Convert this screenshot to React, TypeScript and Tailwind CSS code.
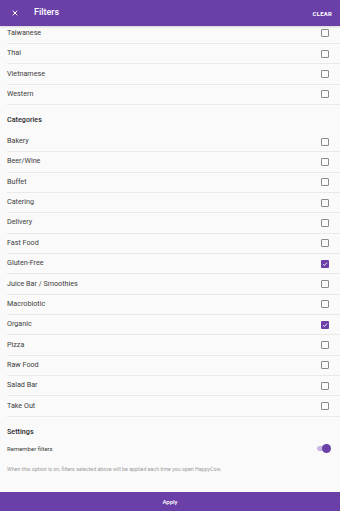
import { ReactNode } from "react"

const cuisines = ["Taiwanese", "Thai", "Vietnamese", "Western"]

const categories: { name: string; checked?: boolean }[] = [
  { name: "Bakery" },
  { name: "Beer/Wine" },
  { name: "Buffet" },
  { name: "Catering" },
  { name: "Delivery" },
  { name: "Fast Food" },
  { name: "Gluten-Free", checked: true },
  { name: "Juice Bar / Smoothies" },
  { name: "Macrobiotic" },
  { name: "Organic", checked: true },
  { name: "Pizza" },
  { name: "Raw Food" },
  { name: "Salad Bar" },
  { name: "Take Out" },
]

function Checkbox({ checked }: { checked?: boolean }) {
  if (checked) {
    return (
      <div className="w-[8px] h-[8px] rounded-[1px] bg-[#6b3fa8] flex items-center justify-center">
        <svg width="6" height="6" viewBox="0 0 12 12">
          <path d="M2 6.2 L4.8 9 L10 3.2" fill="none" stroke="white" strokeWidth="1.8" />
        </svg>
      </div>
    )
  }
  return <div className="w-[8px] h-[8px] rounded-[1px] border-[1.5px] border-[#8a8a8a]" />
}

function Row({ label, checked }: { label: string; checked?: boolean }) {
  return (
    <div className="ml-[7px] h-[20.35px] border-b border-[#e9e9e9] pr-[11px] flex items-center justify-between">
      <span className="text-[7.2px] text-[#3d3d3d]">{label}</span>
      <Checkbox checked={checked} />
    </div>
  )
}

function SectionTitle({ children }: { children: ReactNode }) {
  return (
    <div className="h-[26.8px] pl-[7px] pt-[11px] text-[7.2px] font-medium text-[#2b2b2b] leading-[7px]">
      {children}
    </div>
  )
}

export default function App() {
  return (
    <div
      className="w-full h-[511px] bg-[#fafafa] flex flex-col overflow-hidden"
      style={{ fontFamily: "Roboto, 'Liberation Sans', sans-serif" }}
    >
      <header className="relative z-10 h-[26px] shrink-0 bg-[#6b3fa8] flex items-center pl-[12px] pr-[8px] shadow-[0_1px_2px_rgba(0,0,0,0.15)]">
        <svg width="6" height="6" viewBox="0 0 12 12" className="shrink-0">
          <path d="M1.5 1.5 L10.5 10.5 M10.5 1.5 L1.5 10.5" stroke="white" strokeWidth="2" />
        </svg>
        <span className="ml-[16px] text-[9px] font-medium text-white">Filters</span>
        <span className="ml-auto text-[6px] font-bold text-white tracking-[0.2px]">CLEAR</span>
      </header>

      <main className="flex-1 overflow-hidden">
        <div className="-mt-[2.35px]">
          {cuisines.map((c) => (
            <Row key={c} label={c} />
          ))}
          <SectionTitle>Categories</SectionTitle>
          {categories.map((c) => (
            <Row key={c.name} label={c.name} checked={c.checked} />
          ))}
          <SectionTitle>Settings</SectionTitle>
          <div className="h-[11px] pl-[7px] pr-[9px] flex items-center justify-between">
            <span className="text-[6px] text-[#3d3d3d]">Remember filters</span>
            <div className="relative w-[14px] h-[9px] flex items-center">
              <div className="w-[12px] h-[5px] rounded-full bg-[#c8b5e0]" />
              <div className="absolute right-0 w-[9px] h-[9px] rounded-full bg-[#6b3fa8]" />
            </div>
          </div>
          <div className="h-[31px] pl-[7px] flex items-center text-[5.3px] text-[#9a9a9a]">
            When this option is on, filters selected above will be applied each time you open HappyCow.
          </div>
        </div>
      </main>

      <footer className="h-[19px] shrink-0 bg-[#6b3fa8] flex items-center justify-center">
        <span className="text-[6px] font-medium text-white">Apply</span>
      </footer>
    </div>
  )
}
